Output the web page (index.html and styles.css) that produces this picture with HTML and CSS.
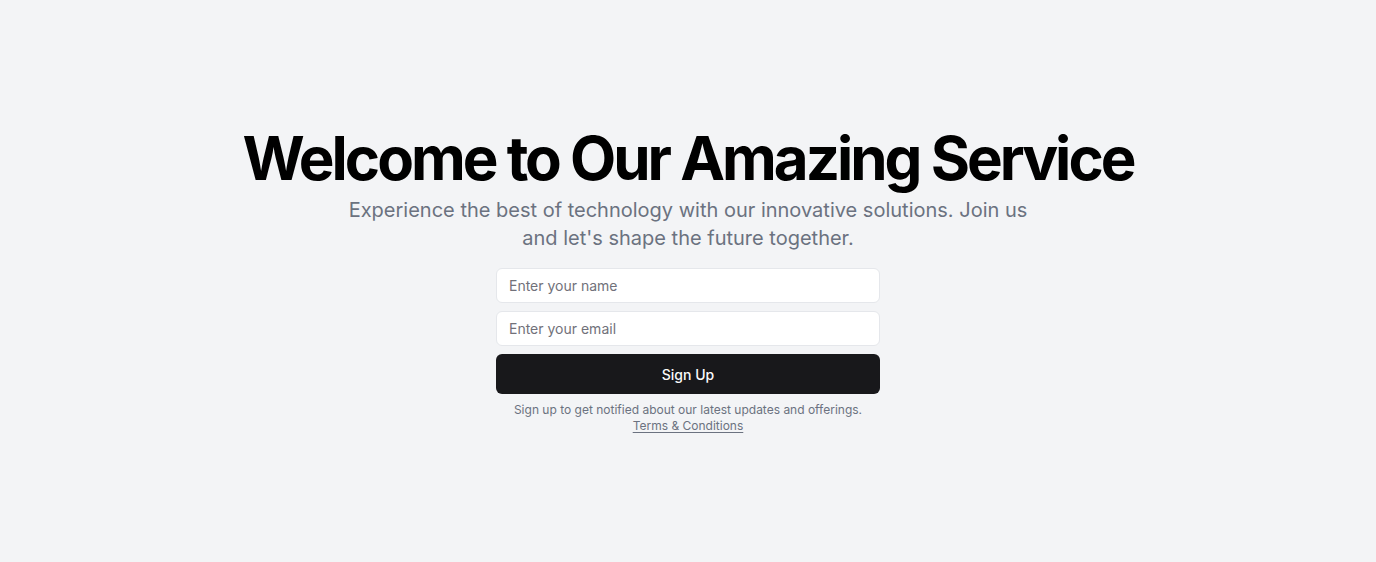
FILE: index.html
```html
<!DOCTYPE html>
<html lang="en">
<head>
<meta charset="utf-8">
<title>Welcome</title>
<link rel="stylesheet" href="styles.css">
</head>
<body>
<main class="hero">
  <div class="content">
    <div class="intro">
      <h1 class="title">Welcome to Our Amazing Service</h1>
      <p class="lead">Experience the best of technology with our innovative solutions. Join us and let's shape the future together.</p>
    </div>
    <div class="signup">
      <form class="form">
        <input class="field" type="text" placeholder="Enter your name">
        <input class="field" type="email" placeholder="Enter your email">
        <button class="btn" type="submit">Sign Up</button>
      </form>
      <p class="note">Sign up to get notified about our latest updates and offerings. <a class="link" href="#">Terms &amp; Conditions</a></p>
    </div>
  </div>
</main>
</body>
</html>
```

FILE: styles.css
```css
* { box-sizing: border-box; }
html, body { margin: 0; padding: 0; }
body {
  background: #f3f4f6;
  font-family: Inter, "Noto Sans", sans-serif;
  color: #000;
}
.hero {
  min-height: 100vh;
  display: flex;
  align-items: center;
  justify-content: center;
  padding: 0 16px;
}
.content {
  display: flex;
  flex-direction: column;
  align-items: center;
  gap: 16px;
  text-align: center;
}
.intro {
  display: flex;
  flex-direction: column;
  align-items: center;
  gap: 8px;
}
.title {
  margin: 0;
  font-size: 60px;
  line-height: 60px;
  font-weight: 700;
  letter-spacing: -3px;
}
.lead {
  margin: 0;
  max-width: 700px;
  font-size: 20px;
  line-height: 28px;
  color: #6b7280;
}
.signup {
  width: 384px;
  display: flex;
  flex-direction: column;
  gap: 8px;
}
.form {
  display: flex;
  flex-direction: column;
  gap: 8px;
  margin: 0;
}
.field {
  height: 35px;
  width: 100%;
  border: 1px solid #e5e7eb;
  border-radius: 6px;
  background: #fff;
  padding: 0 12px;
  font-family: inherit;
  font-size: 14px;
  color: #111;
  outline: none;
}
.field::placeholder { color: #71717a; }
.btn {
  height: 40px;
  width: 100%;
  border: 0;
  border-radius: 6px;
  background: #18181b;
  color: #fafafa;
  font-family: inherit;
  font-size: 14px;
  font-weight: 500;
  cursor: pointer;
}
.note {
  margin: 0;
  font-size: 12px;
  line-height: 16px;
  color: #6b7280;
}
.link {
  color: #6b7280;
  text-decoration: underline;
  text-underline-offset: 2px;
}
```
